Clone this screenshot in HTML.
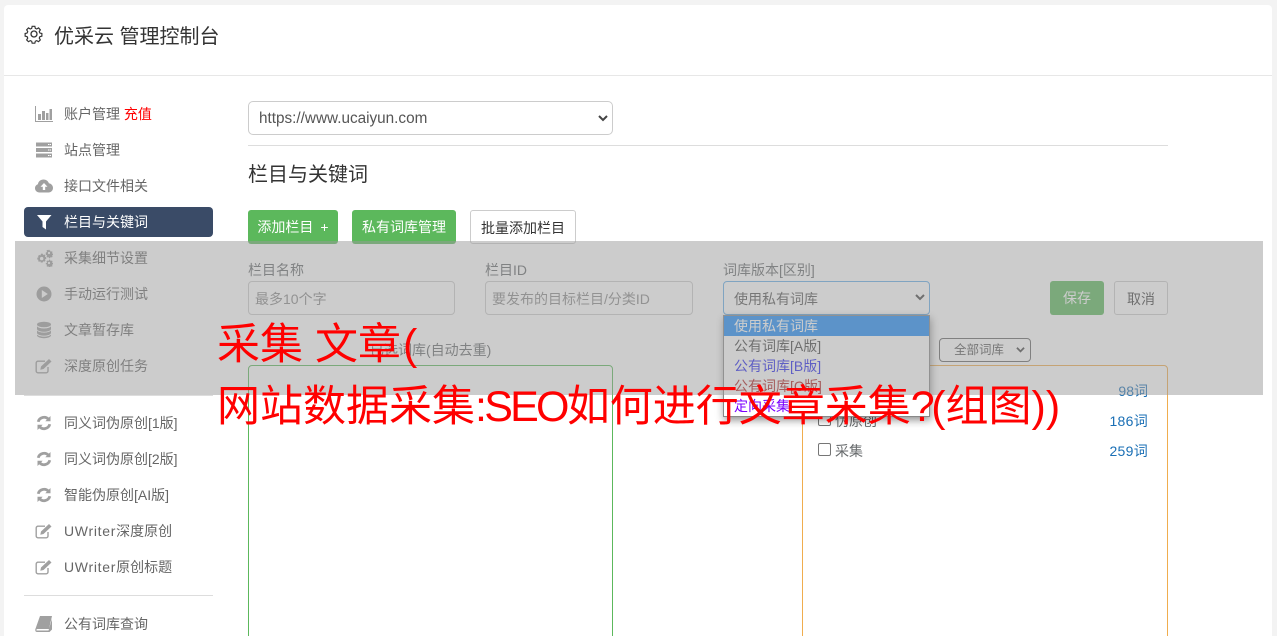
<!DOCTYPE html>
<html lang="zh-CN">
<head>
<meta charset="utf-8">
<title>优采云 管理控制台</title>
<style>
html,body{margin:0;padding:0;width:1277px;height:636px;overflow:hidden;background:#f3f3f3;}
body{position:relative;font-family:"Liberation Sans","Noto Sans CJK SC",sans-serif;font-size:14px;color:#676a6c;}
.a{position:absolute;white-space:nowrap;}
.card{position:absolute;left:4px;top:5px;width:1268px;height:640px;background:#fff;border-radius:4px;}
.nav{position:absolute;left:64px;font-size:14px;line-height:20px;color:#666;white-space:nowrap;}
.ic{position:absolute;left:35px;width:18px;height:18px;}
.box{position:absolute;box-sizing:border-box;border:1px solid #ccc;border-radius:4px;background:#fff;}
.lbl{position:absolute;font-size:14px;line-height:20px;color:#676a6c;white-space:nowrap;}
.ph{position:absolute;font-size:14px;line-height:20px;color:#8a8a8a;white-space:nowrap;}
.btn{position:absolute;box-sizing:border-box;border-radius:3px;text-align:center;font-size:14px;white-space:nowrap;}
.opt{position:absolute;left:734px;font-size:14px;line-height:20px;white-space:nowrap;}
.ct{position:absolute;font-size:14px;line-height:20px;color:#1a6fb5;white-space:nowrap;}
.cb{position:absolute;left:818px;width:13px;height:13px;box-sizing:border-box;border:1px solid #767676;border-radius:2px;background:#fff;}
.red{position:absolute;color:#f00;font-size:43px;line-height:62px;white-space:nowrap;left:217px;}
.u{letter-spacing:.7px;}
</style>
</head>
<body>
<div class="card"></div>
<div class="a" style="left:4px;top:75px;width:1268px;height:1px;background:#e7e7e7;"></div>

<!-- header -->
<svg class="a" style="left:24px;top:24px" width="20" height="20" viewBox="0 0 20 20" fill="none" stroke="#333" stroke-width="1.3"><circle cx="10" cy="10" r="3"/><path d="M8.5 2h3l.5 2.300 1.600.7 2-1.200 2 2.100-1.200 2 .7 1.600 2.200.5v3l-2.200.5-.7 1.600 1.200 2-2 2-2-1.200-1.600.7-.5 2.200h-3l-.5-2.200-1.600-.7-2 1.200-2-2 1.200-2-.7-1.600-2.200-.5v-3l2.200-.5.7-1.600-1.200-2 2-2.100 2 1.200 1.600-.7z" transform="translate(.5 .5) scale(.9)"/></svg>
<div class="a" style="left:54px;top:23px;font-size:20px;line-height:28px;color:#333;">优采云 管理控制台</div>

<!-- sidebar -->
<div class="a" style="left:24px;top:207px;width:189px;height:30px;background:#3a4b67;border-radius:4px;"></div>

<svg class="ic" style="top:105px" viewBox="0 0 18 18"><path d="M0 1h1v15h18v1H0z" fill="#a0a0a0"/><path d="M3 9h3v6H3zM7 6h3v9H7zM11 8h2.500v7H11zM14.500 4H17v11h-2.500z" fill="#a0a0a0"/></svg>
<div class="nav" style="top:104px;">账户管理 <span style="color:#f00">充值</span></div>

<svg class="ic" style="top:141px" viewBox="0 0 18 18"><path d="M1 1.500h16v4H1zM1 7h16v4H1zM1 12.500h16v4H1z" fill="#a0a0a0"/><path d="M13 3h1.500v1H13zM15 3h1v1h-1zM13 8.500h1.500v1H13zM15 8.500h1v1h-1zM13 14h1.500v1H13zM15 14h1v1h-1z" fill="#fff"/></svg>
<div class="nav" style="top:140px;">站点管理</div>

<svg class="ic" style="top:177px" viewBox="0 0 18 18"><path d="M4.500 15.500C2 15.500 0 13.700 0 11.300c0-1.900 1.200-3.400 2.900-4C3.300 4.300 5.700 2.500 8.500 2.500c2.500 0 4.600 1.500 5.400 3.700 2.300.3 4.100 2.300 4.100 4.700 0 2.600-2 4.600-4.500 4.600z" fill="#a0a0a0"/><path d="M9 6l3.500 3.800h-2.300V13H7.800V9.800H5.500z" fill="#fff"/></svg>
<div class="nav" style="top:176px;">接口文件相关</div>

<svg class="ic" style="top:213px" viewBox="0 0 18 18"><path d="M2 2h14.500l-5.500 6.500V16.500L7.500 14V8.500z" fill="#fff"/></svg>
<div class="nav" style="top:212px;color:#fff;">栏目与关键词</div>

<svg class="ic" style="top:249px" viewBox="0 0 18 18" fill="#a0a0a0"><path d="M6.500 4.500l1.200.2.400 1.300 1.200-.6 1.200 1.200-.6 1.200 1.300.4v1.800l-1.300.4.600 1.200-1.200 1.200-1.200-.6-.4 1.300H5.800l-.4-1.300-1.200.6L3 12.100l.6-1.200-1.300-.4V8.700l1.300-.4L3 7.100l1.200-1.200 1.200.6.400-1.300z"/><circle cx="6.700" cy="9.600" r="1.700" fill="#fff"/><path d="M14.300 1l.8.200.2.900.8.300.8-.4.700.8-.5.800.3.800.9.200v1.100l-.9.200-.3.800.5.800-.7.800-.8-.4-.8.300-.2.900h-1.100l-.2-.9-.8-.3-.8.400-.7-.8.500-.8-.3-.8-.9-.2V3.300l.9-.2.300-.8-.5-.8.700-.8.800.4.800-.3.200-.9z" transform="translate(0 .2)"/><circle cx="14" cy="4" r="1.100" fill="#fff"/><path d="M14.300 10.500l.8.200.2.900.8.300.8-.4.700.8-.5.800.3.800.9.200v1.100l-.9.200-.3.800.5.800-.7.800-.8-.4-.8.300-.2.900h-1.100l-.2-.9-.8-.3-.8.400-.7-.8.500-.8-.3-.8-.9-.2v-1.100l.9-.2.300-.8-.5-.8.700-.8.800.4.800-.3.200-.9z"/><circle cx="14" cy="14" r="1.100" fill="#fff"/></svg>
<div class="nav" style="top:248px;">采集细节设置</div>

<svg class="ic" style="top:285px" viewBox="0 0 18 18"><circle cx="9" cy="9" r="7.500" fill="#a0a0a0"/><path d="M6.800 5l6 4-6 4z" fill="#fff"/></svg>
<div class="nav" style="top:284px;">手动运行测试</div>

<svg class="ic" style="top:321px" viewBox="0 0 18 18" fill="#a0a0a0"><ellipse cx="9" cy="3.500" rx="7" ry="2.800"/><path d="M2 5.300c1 1.500 3.800 2.200 7 2.200s6-.7 7-2.200v2.900c-.6 1.500-3.500 2.500-7 2.500s-6.400-1-7-2.500z"/><path d="M2 9.800c1 1.500 3.800 2.200 7 2.200s6-.7 7-2.200v2.700C15.400 14 12.500 15 9 15s-6.400-1-7-2.500z" transform="translate(0 -.4)"/><path d="M2 13.500c1 1.400 3.800 2.100 7 2.100s6-.7 7-2.100v1.300c-.6 1.300-3.500 2.400-7 2.400s-6.400-1.100-7-2.400z"/></svg>
<div class="nav" style="top:320px;">文章暂存库</div>

<svg class="ic" style="top:357px" viewBox="0 0 18 18"><path d="M13 10v4a1.800 1.800 0 0 1-1.800 1.800H3A1.800 1.800 0 0 1 1.200 14V6A1.800 1.800 0 0 1 3 4.200h7" fill="none" stroke="#a0a0a0" stroke-width="1.400"/><path d="M6 9.500l8-7.500 2.500 2.500-8 7.500-3.200.7z" fill="#a0a0a0"/></svg>
<div class="nav" style="top:356px;">深度原创任务</div>

<div class="a" style="left:24px;top:395px;width:189px;height:1px;background:#ddd;"></div>

<svg class="ic" style="top:414px" viewBox="0 0 18 18" fill="none" stroke="#a0a0a0" stroke-width="2.800"><path d="M3.200 7.800a6 6 0 0 1 10.300-2.500"/><path d="M14.800 10.200a6 6 0 0 1-10.300 2.500"/><path d="M15.500 2v5.200h-5.200z" fill="#a0a0a0" stroke="none"/><path d="M2.500 16v-5.200h5.200z" fill="#a0a0a0" stroke="none"/></svg>
<div class="nav" style="top:413px;">同义词伪原创[1版]</div>

<svg class="ic" style="top:450px" viewBox="0 0 18 18" fill="none" stroke="#a0a0a0" stroke-width="2.800"><path d="M3.200 7.800a6 6 0 0 1 10.300-2.500"/><path d="M14.800 10.200a6 6 0 0 1-10.300 2.500"/><path d="M15.500 2v5.200h-5.200z" fill="#a0a0a0" stroke="none"/><path d="M2.500 16v-5.200h5.200z" fill="#a0a0a0" stroke="none"/></svg>
<div class="nav" style="top:449px;">同义词伪原创[2版]</div>

<svg class="ic" style="top:486px" viewBox="0 0 18 18" fill="none" stroke="#a0a0a0" stroke-width="2.800"><path d="M3.200 7.800a6 6 0 0 1 10.300-2.500"/><path d="M14.800 10.200a6 6 0 0 1-10.300 2.500"/><path d="M15.500 2v5.200h-5.200z" fill="#a0a0a0" stroke="none"/><path d="M2.500 16v-5.200h5.200z" fill="#a0a0a0" stroke="none"/></svg>
<div class="nav" style="top:485px;">智能伪原创[AI版]</div>

<svg class="ic" style="top:522px" viewBox="0 0 18 18"><path d="M13 10v4a1.800 1.800 0 0 1-1.800 1.800H3A1.800 1.800 0 0 1 1.200 14V6A1.800 1.800 0 0 1 3 4.200h7" fill="none" stroke="#a0a0a0" stroke-width="1.400"/><path d="M6 9.500l8-7.500 2.500 2.500-8 7.500-3.200.7z" fill="#a0a0a0"/></svg>
<div class="nav" style="top:521px;"><span class="u">UWriter</span>深度原创</div>

<svg class="ic" style="top:558px" viewBox="0 0 18 18"><path d="M13 10v4a1.800 1.800 0 0 1-1.800 1.800H3A1.800 1.800 0 0 1 1.200 14V6A1.800 1.800 0 0 1 3 4.200h7" fill="none" stroke="#a0a0a0" stroke-width="1.400"/><path d="M6 9.500l8-7.500 2.500 2.500-8 7.500-3.200.7z" fill="#a0a0a0"/></svg>
<div class="nav" style="top:557px;"><span class="u">UWriter</span>原创标题</div>

<div class="a" style="left:24px;top:595px;width:189px;height:1px;background:#ddd;"></div>

<svg class="ic" style="top:615px" viewBox="0 0 18 18"><path d="M5 1h12l-3 13H2.500c-1 0-1.500 1-1 1.500h12L17 4v10.500L14.500 17H2c-1.500 0-2-1.500-1.600-3z" fill="#a0a0a0"/></svg>
<div class="nav" style="top:614px;">公有词库查询</div>

<!-- main top -->
<div class="box" style="left:248px;top:101px;width:365px;height:34px;border-radius:5px;"></div>
<div class="a" style="left:259px;top:109px;font-size:15.300px;line-height:20px;color:#555;">https://www.ucaiyun.com</div>
<svg class="a" style="left:597px;top:114px" width="12" height="9" viewBox="0 0 12 9" fill="none" stroke="#444" stroke-width="2"><path d="M2 2l4 4 4-4"/></svg>
<div class="a" style="left:248px;top:145px;width:920px;height:1px;background:#ddd;"></div>
<div class="a" style="left:248px;top:161px;font-size:20px;line-height:28px;color:#333;">栏目与关键词</div>

<div class="btn" style="left:248px;top:210px;width:90px;height:34px;line-height:34px;background:#5cb85c;color:#fff;">添加栏目<span style="margin-left:7px">+</span></div>
<div class="btn" style="left:352px;top:210px;width:104px;height:34px;line-height:34px;background:#5cb85c;color:#fff;">私有词库管理</div>
<div class="btn" style="left:470px;top:210px;width:106px;height:34px;line-height:34px;background:#fff;border:1px solid #ccc;color:#333;">批量添加栏目</div>

<!-- form -->
<div class="lbl" style="left:248px;top:260px;">栏目名称</div>
<div class="box" style="left:248px;top:281px;width:207px;height:34px;"></div>
<div class="ph" style="left:255px;top:289px;">最多10个字</div>

<div class="lbl" style="left:485px;top:260px;">栏目ID</div>
<div class="box" style="left:485px;top:281px;width:208px;height:34px;"></div>
<div class="ph" style="left:492px;top:289px;">要发布的目标栏目/分类ID</div>

<div class="lbl" style="left:723px;top:260px;">词库版本[区别]</div>
<div class="box" style="left:723px;top:281px;width:207px;height:34px;border-color:#66afe9;"></div>
<div class="ph" style="left:734px;top:289px;color:#555;">使用私有词库</div>
<svg class="a" style="left:914px;top:293px" width="12" height="9" viewBox="0 0 12 9" fill="none" stroke="#444" stroke-width="2"><path d="M2 2l4 4 4-4"/></svg>

<div class="btn" style="left:1050px;top:281px;width:54px;height:34px;line-height:34px;background:#5cb85c;color:#fff;">保存</div>
<div class="btn" style="left:1114px;top:281px;width:54px;height:34px;line-height:34px;background:#fff;border:1px solid #ccc;color:#444;">取消</div>

<div class="lbl" style="left:370px;top:340px;">已选词库(自动去重)</div>

<div class="a" style="left:248px;top:365px;width:365px;height:300px;box-sizing:border-box;border:1px solid #5cb85c;border-radius:4px;"></div>
<div class="a" style="left:802px;top:365px;width:366px;height:300px;box-sizing:border-box;border:1px solid #f0ad4e;border-radius:4px;background:#fff;"></div>

<div class="box" style="left:939px;top:338px;width:92px;height:24px;border-color:#666;"></div>
<div class="a" style="left:954px;top:341px;font-size:12.500px;line-height:18px;color:#555;">全部词库</div>
<svg class="a" style="left:1015px;top:346px" width="11" height="8" viewBox="0 0 12 9" fill="none" stroke="#444" stroke-width="2"><path d="M2 2l4 4 4-4"/></svg>

<div class="cb" style="top:383px;"></div>
<div class="lbl" style="left:835px;top:381px;">采集</div>
<div class="ct" style="right:129px;top:381px;">98词</div>
<div class="cb" style="top:413px;"></div>
<div class="lbl" style="left:835px;top:411px;">伪原创</div>
<div class="ct" style="right:129px;top:411px;letter-spacing:.3px;">186词</div>
<div class="cb" style="top:443px;"></div>
<div class="lbl" style="left:835px;top:441px;">采集</div>
<div class="ct" style="right:129px;top:441px;letter-spacing:.3px;">259词</div>

<!-- dropdown -->
<div class="a" style="left:723px;top:315px;width:207px;height:102px;box-sizing:border-box;background:#fff;border:1px solid #888;box-shadow:1px 3px 8px rgba(0,0,0,.45);"></div>
<div class="a" style="left:724px;top:316px;width:205px;height:20px;background:#1e8cf8;"></div>
<div class="opt" style="top:316px;color:#fff;">使用私有词库</div>
<div class="opt" style="top:336px;color:#444;">公有词库[A版]</div>
<div class="opt" style="top:356px;color:#2222ee;">公有词库[B版]</div>
<div class="opt" style="top:376px;color:#b02020;">公有词库[C版]</div>
<div class="opt" style="top:396px;color:#7a00ff;">定向采集</div>

<!-- overlay -->
<div class="a" style="left:15px;top:241px;width:1248px;height:154px;background:rgba(153,153,153,.5);"></div>

<div class="red" style="top:314px;">采集 文章<span style="margin-left:2px">(</span></div>
<div class="red" style="top:376px;">网站数据采集<span style="letter-spacing:-2.750px">:SEO</span>如何进行文章采集<span style="letter-spacing:-3.500px">?</span>(组图))</div>
</body>
</html>
